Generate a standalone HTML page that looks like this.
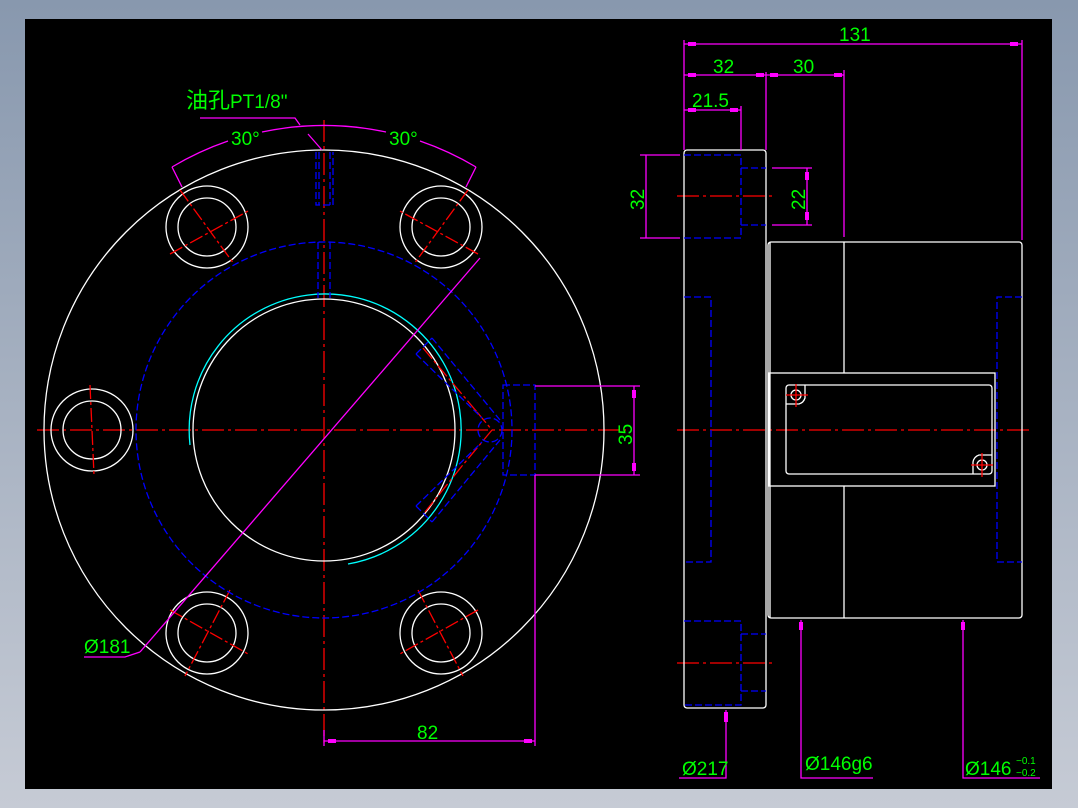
<!DOCTYPE html>
<html><head><meta charset="utf-8"><style>
html,body{margin:0;padding:0;width:1078px;height:808px;overflow:hidden;background:linear-gradient(#8898ae,#c6cbd5);}
svg{position:absolute;left:0;top:0}
text{font-family:"Liberation Sans","Noto Sans CJK SC",sans-serif;fill:#00ff00;font-size:19px}
</style></head><body>
<svg width="1078" height="808" viewBox="0 0 1078 808">
<rect x="25" y="19" width="1027" height="770" fill="#000"/>
<g fill="none" stroke-width="1.3">
<g stroke="#ff0000" stroke-dasharray="22,4,3,4">
<line x1="37" y1="430" x2="626" y2="430"/>
<line x1="324" y1="120" x2="324" y2="745"/>
<line x1="677" y1="430" x2="1030" y2="430"/>
<line x1="677" y1="196" x2="775" y2="196"/>
<line x1="677" y1="663" x2="775" y2="663"/>
</g>
<g stroke="#fff">
<circle cx="324" cy="430" r="280"/>
<circle cx="324" cy="430" r="131"/>
<circle cx="207" cy="227" r="41"/><circle cx="207" cy="227" r="29"/>
<circle cx="441" cy="227" r="41"/><circle cx="441" cy="227" r="29"/>
<circle cx="92" cy="430" r="41"/><circle cx="92" cy="430" r="29"/>
<circle cx="207" cy="633" r="41"/><circle cx="207" cy="633" r="29"/>
<circle cx="441" cy="633" r="41"/><circle cx="441" cy="633" r="29"/>
</g>
<path d="M190 445 A136 136 0 1 1 348 564" stroke="#00ffff"/>
<g stroke="#ff0000" stroke-dasharray="14,3,3,3">
<line x1="180" y1="190" x2="234" y2="264"/><line x1="170" y1="254" x2="250" y2="210"/>
<line x1="468" y1="190" x2="414" y2="264"/><line x1="478" y1="254" x2="398" y2="210"/>
<line x1="90" y1="385" x2="94" y2="475"/>
<line x1="170" y1="610" x2="250" y2="655"/><line x1="230" y1="590" x2="185" y2="676"/>
<line x1="478" y1="610" x2="398" y2="655"/><line x1="418" y1="590" x2="463" y2="676"/>
<line x1="423" y1="348" x2="477" y2="412"/><line x1="477" y1="412" x2="492" y2="430"/>
<line x1="492" y1="430" x2="462" y2="466"/><line x1="462" y1="466" x2="425" y2="512"/>
</g>
<g stroke="#0000ff" stroke-dasharray="7,3">
<circle cx="324" cy="430" r="188"/>
<path d="M316 152 V205 H333 V152 M319 152 V205 M330 152 V205"/>
<path d="M318 242 V298 M330 242 V298"/>
<rect x="503" y="385" width="32" height="90"/>
<circle cx="490" cy="430" r="12"/>
<line x1="432" y1="338" x2="500" y2="420"/>
<line x1="416" y1="354" x2="482" y2="418"/>
<line x1="416" y1="354" x2="432" y2="338"/>
<line x1="432" y1="522" x2="500" y2="440"/>
<line x1="416" y1="506" x2="482" y2="442"/>
<line x1="416" y1="506" x2="432" y2="522"/>
</g>
<g stroke="#ff00ff">
<line x1="480" y1="258" x2="140" y2="652"/>
<path d="M140 652 L125 657 H84"/>
<path d="M200 118 H295 L300 125"/>
<line x1="308" y1="134" x2="322" y2="150"/>
<path d="M172 167 A300 300 0 0 1 228 141"/>
<path d="M262 132 A300 300 0 0 1 386 132"/>
<path d="M420 141 A300 300 0 0 1 476 167"/>
<line x1="172" y1="167" x2="182" y2="187"/>
<line x1="476" y1="167" x2="466" y2="187"/>
<line x1="535" y1="386" x2="640" y2="386"/>
<line x1="535" y1="475" x2="640" y2="475"/>
<line x1="634" y1="386" x2="634" y2="475"/>
<line x1="535" y1="475" x2="535" y2="746"/>
<line x1="324" y1="730" x2="324" y2="746"/>
<line x1="324" y1="741" x2="535" y2="741"/>
</g>
<g stroke="#fff">
<rect x="684" y="150" width="82" height="558" rx="3"/>
<rect x="768" y="242" width="254" height="376" rx="3"/>
<line x1="770" y1="242" x2="770" y2="618"/>
<line x1="844" y1="242" x2="844" y2="373"/><line x1="844" y1="486" x2="844" y2="618"/>
<rect x="769" y="373" width="226" height="113"/>
<rect x="786" y="385" width="206" height="89" rx="3"/>
<circle cx="796" cy="395" r="5"/><path d="M786 404 H799 A9 9 0 0 0 805 398 V385"/>
<circle cx="982" cy="465" r="5"/><path d="M992 455 H979 A9 9 0 0 0 973 462 V474"/>
</g>
<g stroke="#ff0000"><line x1="786" y1="395" x2="808" y2="395"/><line x1="796" y1="384" x2="796" y2="407"/>
<line x1="971" y1="465" x2="993" y2="465"/><line x1="982" y1="453" x2="982" y2="477"/></g>
<g stroke="#0000ff" stroke-dasharray="7,3">
<path d="M684 155 H741 V238 H684"/><path d="M741 168 H766 M741 225 H766"/>
<path d="M684 621 H741 V705 H684"/><path d="M741 634 H766 M741 691 H766"/>
<path d="M684 297 H711 V562 H684"/>
<path d="M1022 297 H997 V562 H1022"/>
</g>
<g stroke="#ff00ff">
<line x1="684" y1="40" x2="684" y2="150"/><line x1="1022" y1="40" x2="1022" y2="240"/>
<line x1="766" y1="72" x2="766" y2="150"/><line x1="844" y1="70" x2="844" y2="237"/>
<line x1="741" y1="106" x2="741" y2="150"/>
<line x1="684" y1="44" x2="1022" y2="44"/>
<line x1="684" y1="75" x2="844" y2="75"/>
<line x1="684" y1="110" x2="741" y2="110"/>
<line x1="640" y1="155" x2="680" y2="155"/><line x1="640" y1="238" x2="680" y2="238"/>
<line x1="646" y1="155" x2="646" y2="238"/>
<line x1="772" y1="168" x2="812" y2="168"/><line x1="772" y1="225" x2="812" y2="225"/>
<line x1="807" y1="168" x2="807" y2="225"/>
<path d="M726 710 V778 H679"/>
<path d="M801 620 V778 H873"/>
<path d="M963 620 V778 H1040"/>
</g>
</g>
<g fill="#ff00ff">
<rect x="688" y="42" width="8" height="4"/><rect x="1010" y="42" width="8" height="4"/>
<rect x="688" y="73" width="8" height="4"/><rect x="756" y="73" width="8" height="4"/>
<rect x="770" y="73" width="8" height="4"/><rect x="834" y="73" width="8" height="4"/>
<rect x="688" y="108" width="8" height="4"/><rect x="730" y="108" width="8" height="4"/>
<rect x="805" y="172" width="4" height="8"/><rect x="805" y="212" width="4" height="8"/>
<rect x="724" y="712" width="4" height="10"/><rect x="799" y="622" width="4" height="8"/><rect x="961" y="622" width="4" height="8"/>
<rect x="328" y="739" width="8" height="4"/><rect x="524" y="739" width="8" height="4"/>
<rect x="632" y="390" width="4" height="8"/><rect x="632" y="463" width="4" height="8"/>
</g>
<text x="186" y="108" style="font-size:22px">油孔</text>
<text x="230" y="108">PT1/8"</text>
<text x="231" y="145">30°</text>
<text x="389" y="145">30°</text>
<text x="84" y="653">Ø181</text>
<text x="417" y="739">82</text>
<text transform="translate(632,445) rotate(-90)">35</text>
<text x="839" y="41">131</text>
<text x="713" y="73">32</text>
<text x="793" y="73">30</text>
<text x="692" y="107">21.5</text>
<text transform="translate(644,210) rotate(-90)">32</text>
<text transform="translate(805,210) rotate(-90)">22</text>
<text x="682" y="775">Ø217</text>
<text x="805" y="770">Ø146g6</text>
<text x="965" y="775">Ø146</text>
<text x="1016" y="764" style="font-size:10px">−0.1</text>
<text x="1016" y="776" style="font-size:10px">−0.2</text>
</svg>
</body></html>
